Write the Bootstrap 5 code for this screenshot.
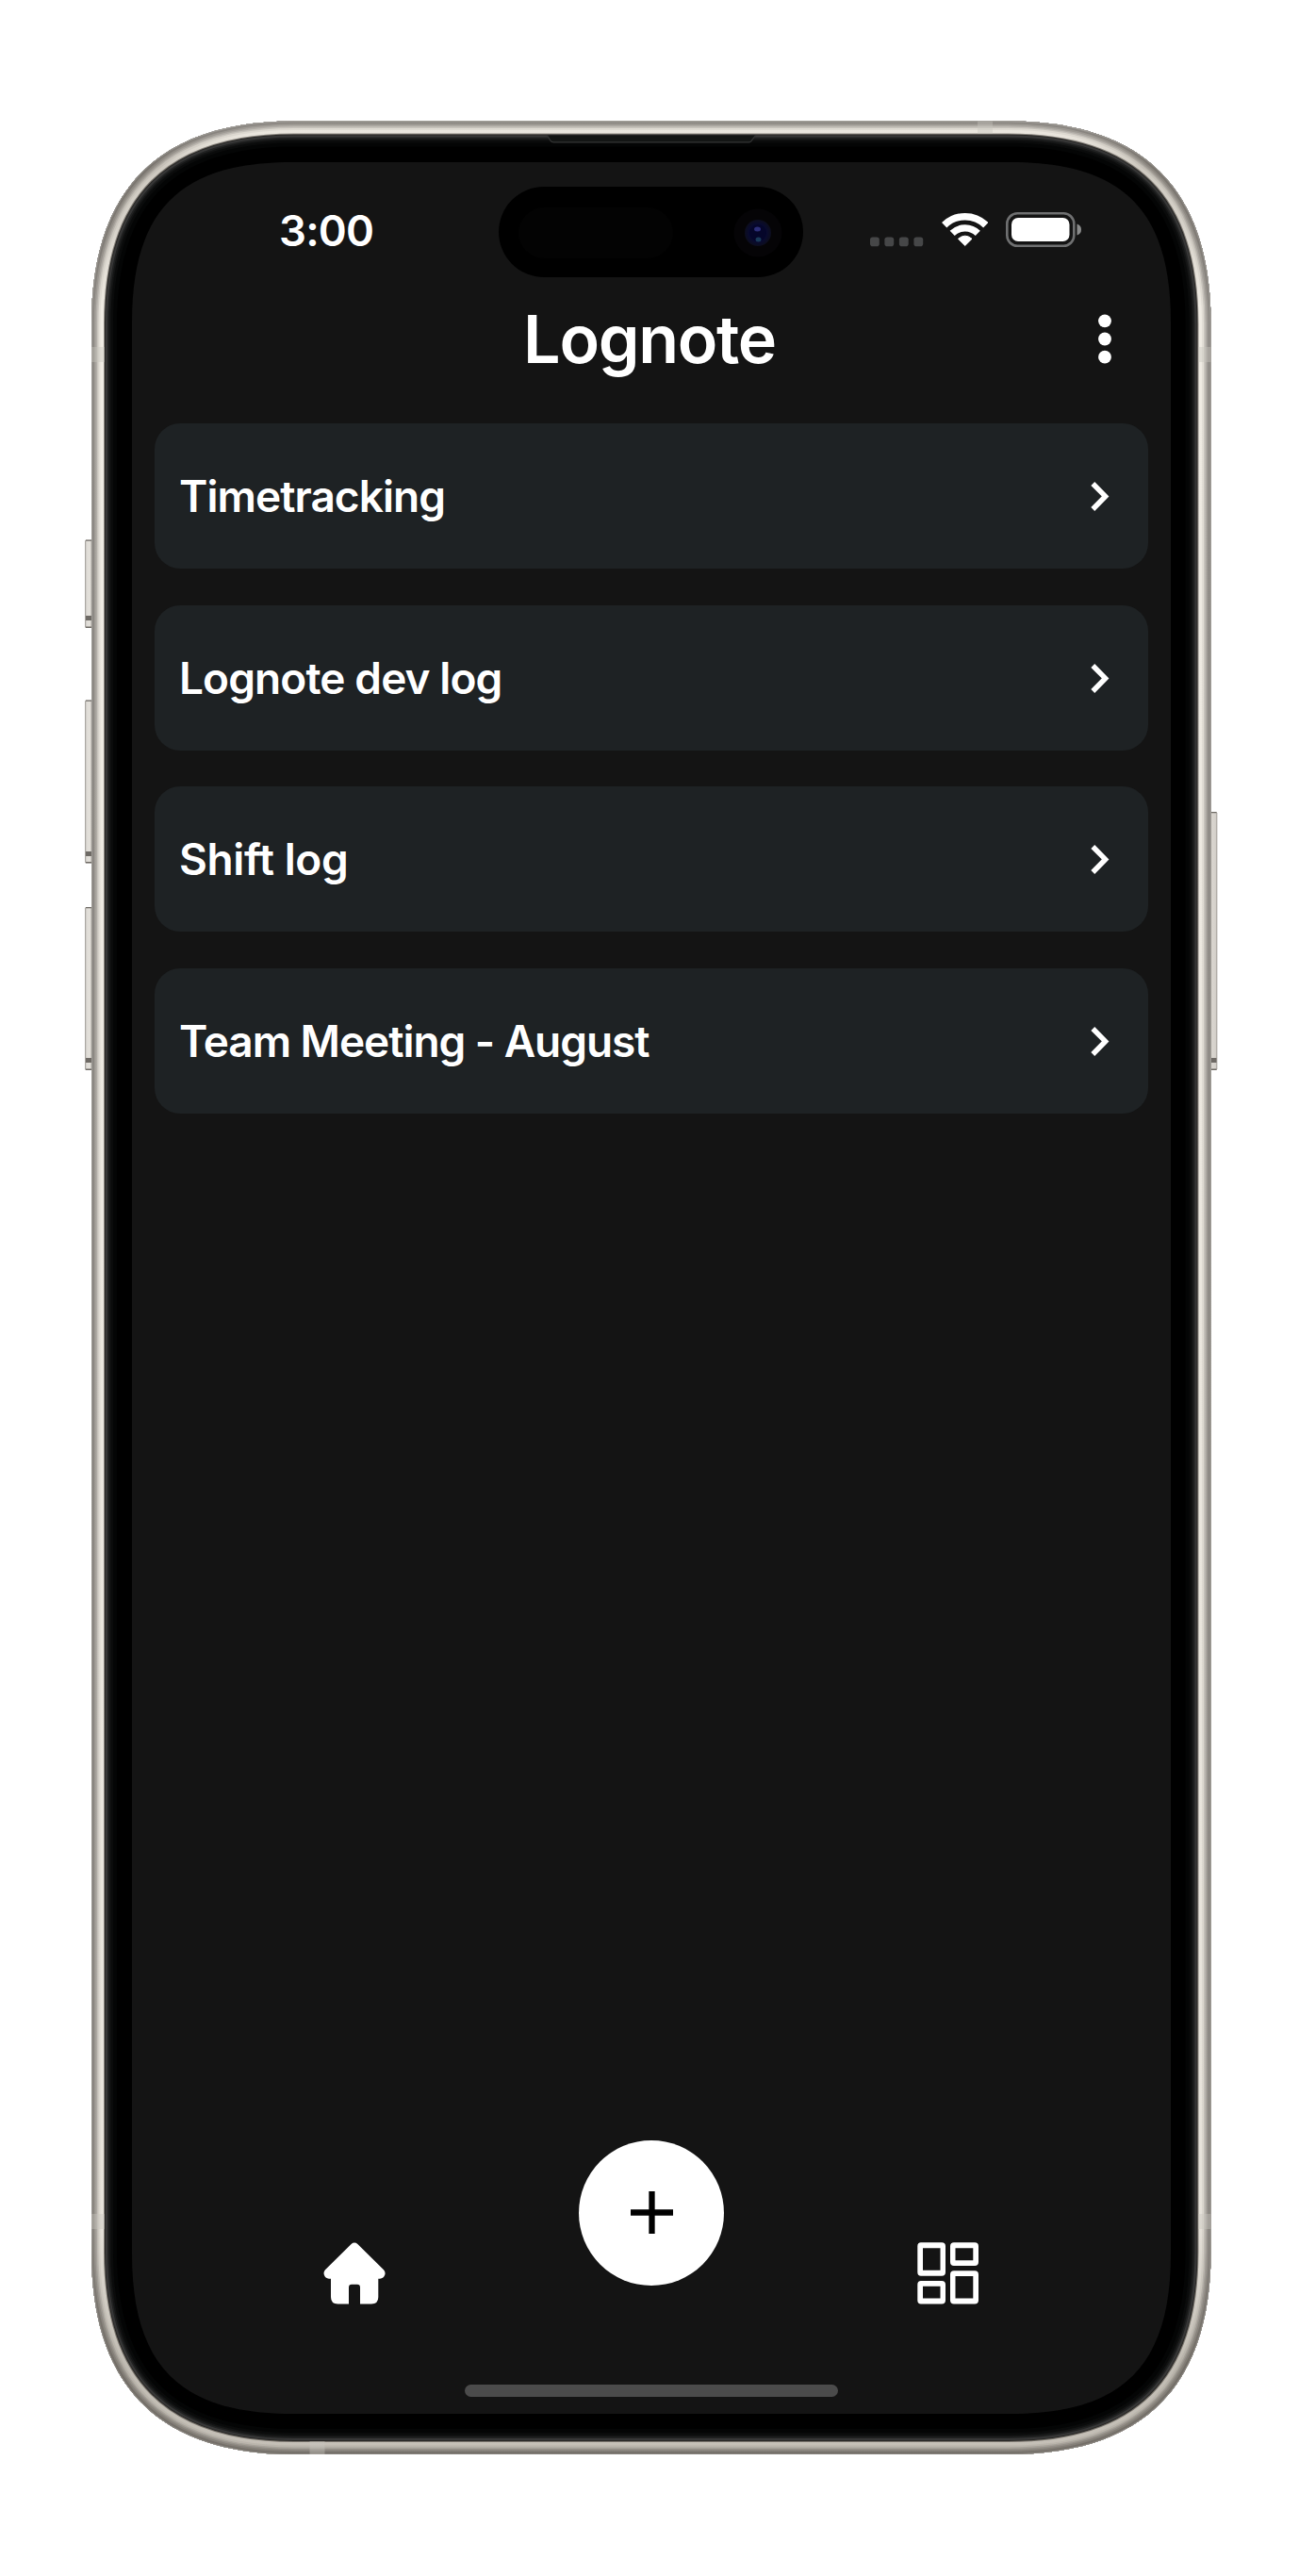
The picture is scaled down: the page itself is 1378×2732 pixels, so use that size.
<!DOCTYPE html>
<html lang="en">
<head>
<meta charset="utf-8">
<meta name="viewport" content="width=device-width, initial-scale=1">
<title>Lognote</title>
<link rel="stylesheet" href="https://cdn.jsdelivr.net/npm/bootstrap@5.3.0/dist/css/bootstrap.min.css">
<style>
  body { background: #fff; font-family: Inter, "Liberation Sans", sans-serif; }
  .stage { width: 1378px; height: 2732px; padding: 172px 136px 172px 140px; }
  .device-frame { left: 0; top: 0; z-index: 0; }
  .phone-screen { z-index: 1; height: 2388px; color: #fff; }
  .island { left: 389px; top: 26px; width: 323px; height: 96px; }
  .status-row { height: 146px; padding: 46px 94px 0 156px; }
  .clock { font-size: 45.5px; line-height: 54px; font-weight: 600; letter-spacing: -.8px; }
  .status-icons { gap: 19px; height: 44px; }
  .title-row { height: 131px; padding: 0 62px; }
  .title-row h1 { font-size: 70px; line-height: 84px; font-weight: 600; letter-spacing: -1.3px; }
  .title-row .side { width: 16px; }
  .log-list { gap: 38.5px; padding: 0 24px; }
  .log-item { height: 154px; padding: 0 41px 0 26px; border-radius: 27px; background: #1e2224; color: #fff;
              font-size: 46px; line-height: 56px; font-weight: 600; letter-spacing: -.95px; }
  .log-item:nth-child(2) { letter-spacing: -.9px; }
  .log-item:nth-child(3) { letter-spacing: -.4px; }
  .log-item:nth-child(4) { letter-spacing: -1.05px; }
  .tab-row { width: 945px; height: 174px; margin-bottom: 85.5px; }
  .fab { width: 154px; height: 154px; }
  .home-indicator { width: 396px; height: 13px; margin-bottom: 18px; background: #4b4b4b; }
</style>
<script src="https://cdn.jsdelivr.net/npm/bootstrap@5.3.0/dist/js/bootstrap.bundle.min.js"></script>
</head>
<body>
<div class="stage position-relative overflow-hidden">

  <!-- phone body -->
  <svg class="device-frame position-absolute" width="1378" height="2732" viewBox="0 0 1378 2732" fill="none" aria-hidden="true">
    <defs>
      <path id="body" d="M312 128.5H1069.500C1212.500 128.500 1284.500 200.500 1284.500 343.500V2388C1284.500 2531 1212.500 2603 1069.500 2603H312C169 2603 97 2531 97 2388V343.500C97 200.500 169 128.500 312 128.500Z"/>
      <clipPath id="bodyClip"><use href="#body"/></clipPath>
      <linearGradient id="shade" gradientUnits="userSpaceOnUse" x1="0" y1="128" x2="0" y2="2603">
        <stop offset="0" stop-color="#1c1408" stop-opacity="0"/>
        <stop offset=".006" stop-color="#1c1408" stop-opacity=".03"/>
        <stop offset=".02" stop-color="#1c1408" stop-opacity=".16"/>
        <stop offset=".045" stop-color="#1c1408" stop-opacity=".12"/>
        <stop offset=".08" stop-color="#1c1408" stop-opacity="0"/>
        <stop offset=".9" stop-color="#1c1408" stop-opacity=".04"/>
        <stop offset=".96" stop-color="#1c1408" stop-opacity=".22"/>
        <stop offset="1" stop-color="#1c1408" stop-opacity=".2"/>
      </linearGradient>
      <linearGradient id="keyL" x1="0" x2="1" y1="0" y2="0">
        <stop offset="0" stop-color="#96928d"/><stop offset=".2" stop-color="#dedbd6"/><stop offset=".6" stop-color="#e4e1db"/><stop offset="1" stop-color="#857f79"/>
      </linearGradient>
      <linearGradient id="keyR" x1="1" x2="0" y1="0" y2="0">
        <stop offset="0" stop-color="#96928d"/><stop offset=".2" stop-color="#d5d1cb"/><stop offset=".6" stop-color="#dad6d0"/><stop offset="1" stop-color="#857f79"/>
      </linearGradient>
    </defs>
    <g fill="url(#keyL)">
      <rect x="90" y="572.500" width="9" height="93.500" rx="1.500"/>
      <rect x="90" y="742.500" width="9" height="173" rx="1.500"/>
      <rect x="90" y="962" width="9" height="173" rx="1.500"/>
    </g>
    <rect x="1282" y="861" width="9.300" height="274" rx="1.500" fill="url(#keyR)"/>
    <g fill="#6e6a65">
      <path d="M91 653h6v5h-6zM91 664.500h6v1.500h-6zM91 572.500h6v1.300h-6z"/>
      <path d="M91 903h6v5h-6zM91 914h6v1.500h-6zM91 742.500h6v1.300h-6z"/>
      <path d="M91 1122h6v5h-6zM91 1133.500h6v1.500h-6zM91 962h6v1.300h-6z"/>
      <path d="M1284.500 1122h6v5h-6zM1284.500 1133.500h6v1.500h-6zM1284.500 861h6v1.300h-6z"/>
    </g>
    <g clip-path="url(#bodyClip)">
      <use href="#body" fill="#000"/>
      <use href="#body" stroke="#040505" stroke-width="54"/>
      <use href="#body" stroke="#0a0b0b" stroke-width="46"/>
      <use href="#body" stroke="#131414" stroke-width="41"/>
      <use href="#body" stroke="#202121" stroke-width="37.500"/>
      <use href="#body" stroke="#373737" stroke-width="34"/>
      <use href="#body" stroke="#2a2927" stroke-width="30"/>
      <use href="#body" stroke="#8e8a84" stroke-width="28"/>
      <use href="#body" stroke="#efebe3" stroke-width="26"/>
      <use href="#body" stroke="#e2ded6" stroke-width="19"/>
      <use href="#body" stroke="#cac6bf" stroke-width="15"/>
      <use href="#body" stroke="#b3afa9" stroke-width="12"/>
      <use href="#body" stroke="#9f9b95" stroke-width="9"/>
      <use href="#body" stroke="#8b8782" stroke-width="5.500"/>
      <use href="#body" stroke="#a09d98" stroke-width="2"/>
      <use href="#body" stroke="url(#shade)" stroke-width="28"/>
      <g fill="#c9c5be" fill-opacity=".4">
        <rect x="97" y="368" width="14" height="16"/><rect x="1271" y="368" width="14" height="16"/>
        <rect x="97" y="2348" width="14" height="16"/><rect x="1271" y="2348" width="14" height="16"/>
        <rect x="1037" y="128" width="16" height="14"/><rect x="328.500" y="2589" width="16" height="14"/>
      </g>
    </g>
    <path d="M580.500 143.500H801.500L797 149.500Q796 151 794 151H587.500Q585 151 584 149.500Z" fill="#131514"/>
    <path d="M580.500 143.500L584 149.200Q585 150.800 587.500 150.800H794.500Q796.300 150.800 797.300 149.200L801.500 143.500" stroke="#343535" stroke-width="1.200"/>
    <!-- display glass -->
    <path d="M310 172H1072C1191 172 1242 223 1242 342V2390C1242 2509 1191 2560 1072 2560H310C191 2560 140 2509 140 2390V342C140 223 191 172 310 172Z" fill="#141414"/>
  </svg>

  <main class="phone-screen position-relative d-flex flex-column">
    <div class="island position-absolute">
      <svg width="323" height="96" viewBox="0 0 323 96" class="d-block" aria-hidden="true">
        <defs>
          <radialGradient id="lens"><stop offset="0" stop-color="#0b0c42"/><stop offset=".6" stop-color="#080a33"/><stop offset="1" stop-color="#0c0d1d"/></radialGradient>
        </defs>
        <rect width="323" height="96" rx="48" fill="#000"/>
        <rect x="21" y="22" width="164" height="54" rx="27" fill="#030303"/>
        <circle cx="275" cy="49" r="25.500" fill="#050406"/>
        <circle cx="275" cy="49" r="14" fill="url(#lens)"/>
        <circle cx="275" cy="49" r="9" fill="#05062a"/>
        <ellipse cx="274.500" cy="45" rx="3.500" ry="2.500" fill="#2c2e78"/>
        <ellipse cx="275.500" cy="56" rx="3" ry="2.500" fill="#193a58"/>
      </svg>
    </div>

    <div class="status-row d-flex justify-content-between align-items-start">
      <span class="clock">3:00</span>
      <div class="status-icons d-flex align-items-end">
        <svg width="56.300" height="11" viewBox="0 0 56.300 11" fill="#464748" aria-hidden="true">
          <rect x="0" y=".5" width="9.800" height="9.800" rx="2.800"/><rect x="15.400" y=".5" width="9.800" height="9.800" rx="2.800"/>
          <rect x="30.900" y=".5" width="9.800" height="9.800" rx="2.800"/><rect x="46.400" y=".5" width="9.800" height="9.800" rx="2.800"/>
        </svg>
        <svg width="49.500" height="37" viewBox="0 0 49.500 37" fill="none" stroke="#fff" aria-hidden="true">
          <path d="M2.700 13.700A31.500 31.500 0 0 1 46.800 13.700" stroke-width="7.600"/>
          <path d="M11.200 22.400A19.200 19.200 0 0 1 38.300 22.400" stroke-width="7.200"/>
          <path d="M24.750 35.500L17.500 28.300Q24.750 22 32 28.300Z" fill="#fff" stroke-width="1" stroke-linejoin="round"/>
        </svg>
        <svg width="81" height="37" viewBox="0 0 81 37" fill="none" aria-hidden="true">
          <rect x="1.300" y="1.300" width="71" height="34.400" rx="11" stroke="#6f7071" stroke-width="2.600"/>
          <rect x="6" y="6" width="61.500" height="25" rx="7" fill="#fff"/>
          <path d="M75.500 12.500Q80 14 80 18.500T75.500 24.500Z" fill="#8a8b8b"/>
        </svg>
      </div>
    </div>

    <header class="title-row d-flex justify-content-between align-items-start">
      <span class="side"></span>
      <h1 class="m-0 pe-1">Lognote</h1>
      <svg class="side" width="16" height="84" viewBox="0 0 16 84" fill="#fff" role="img" aria-label="More">
        <circle cx="8" cy="22.300" r="6.900"/><circle cx="8" cy="41.500" r="6.900"/><circle cx="8" cy="60.700" r="6.900"/>
      </svg>
    </header>

    <nav class="log-list d-flex flex-column">
      <a class="log-item d-flex align-items-center justify-content-between text-decoration-none" href="#">Timetracking
        <svg width="20" height="32" viewBox="0 0 20 32" fill="none" stroke="#fff" stroke-width="5.500" aria-hidden="true"><path d="M2.300 3L15.600 16.400L2.300 30"/></svg></a>
      <a class="log-item d-flex align-items-center justify-content-between text-decoration-none" href="#">Lognote dev log
        <svg width="20" height="32" viewBox="0 0 20 32" fill="none" stroke="#fff" stroke-width="5.500" aria-hidden="true"><path d="M2.300 3L15.600 16.400L2.300 30"/></svg></a>
      <a class="log-item d-flex align-items-center justify-content-between text-decoration-none" href="#">Shift log
        <svg width="20" height="32" viewBox="0 0 20 32" fill="none" stroke="#fff" stroke-width="5.500" aria-hidden="true"><path d="M2.300 3L15.600 16.400L2.300 30"/></svg></a>
      <a class="log-item d-flex align-items-center justify-content-between text-decoration-none" href="#">Team Meeting - August
        <svg width="20" height="32" viewBox="0 0 20 32" fill="none" stroke="#fff" stroke-width="5.500" aria-hidden="true"><path d="M2.300 3L15.600 16.400L2.300 30"/></svg></a>
    </nav>

    <footer class="mt-auto d-flex flex-column align-items-center">
      <div class="tab-row row g-0">
        <div class="col d-flex justify-content-center align-items-end">
          <svg width="66" height="66" viewBox="0 0 66 66" fill="#fff" role="img" aria-label="Home">
            <path d="M29.600 1.900Q33 -1 36.400 1.900L64 29.300Q66.200 31.600 65.300 34.600Q64 38.600 60 38.700H58.300V58.300Q58.300 65.500 51 65.500H39V48Q39 44.800 36 44.800H30Q27 44.800 27 48V65.500H15.300Q8 65.500 8 58.300V38.700H6Q2 38.600 .8 34.600Q-.1 31.600 2 29.300Z"/>
          </svg>
        </div>
        <div class="col d-flex justify-content-center align-items-start">
          <button class="fab btn btn-light bg-white border-0 rounded-circle p-0 d-flex align-items-center justify-content-center" aria-label="Add">
            <svg width="45" height="45" viewBox="0 0 45 45" stroke="#000" stroke-width="6.300"><path d="M22.500 0V45M0 22.500H45"/></svg>
          </button>
        </div>
        <div class="col d-flex justify-content-center align-items-end">
          <svg width="66" height="66" viewBox="0 0 66 66" fill="#fff" fill-rule="evenodd" role="img" aria-label="Boards">
            <path d="M4 .3H26Q30 .3 30 4.300V31.700Q30 35.700 26 35.700H4Q.3 35.700 .3 31.700V4.300Q.3 .3 4 .3ZM6 6.300V29.800H24.500V6.300Z"/>
            <path d="M39 .3H61Q65 .3 65 4.300V21Q65 25 61 25H39Q35 25 35 21V4.300Q35 .3 39 .3ZM40.500 6.300V19.300H59.300V6.300Z"/>
            <path d="M4 41H26Q30 41 30 45V61.500Q30 65.500 26 65.500H4Q.3 65.500 .3 61.500V45Q.3 41 4 41ZM6 46.800V59.500H24.500V46.800Z"/>
            <path d="M39 30.300H61Q65 30.300 65 34.300V61.500Q65 65.500 61 65.500H39Q35 65.500 35 61.500V34.300Q35 30.300 39 30.300ZM40.500 36V59.500H59.300V36Z"/>
          </svg>
        </div>
      </div>
      <div class="home-indicator rounded-pill"></div>
    </footer>
  </main>
</div>
</body>
</html>
